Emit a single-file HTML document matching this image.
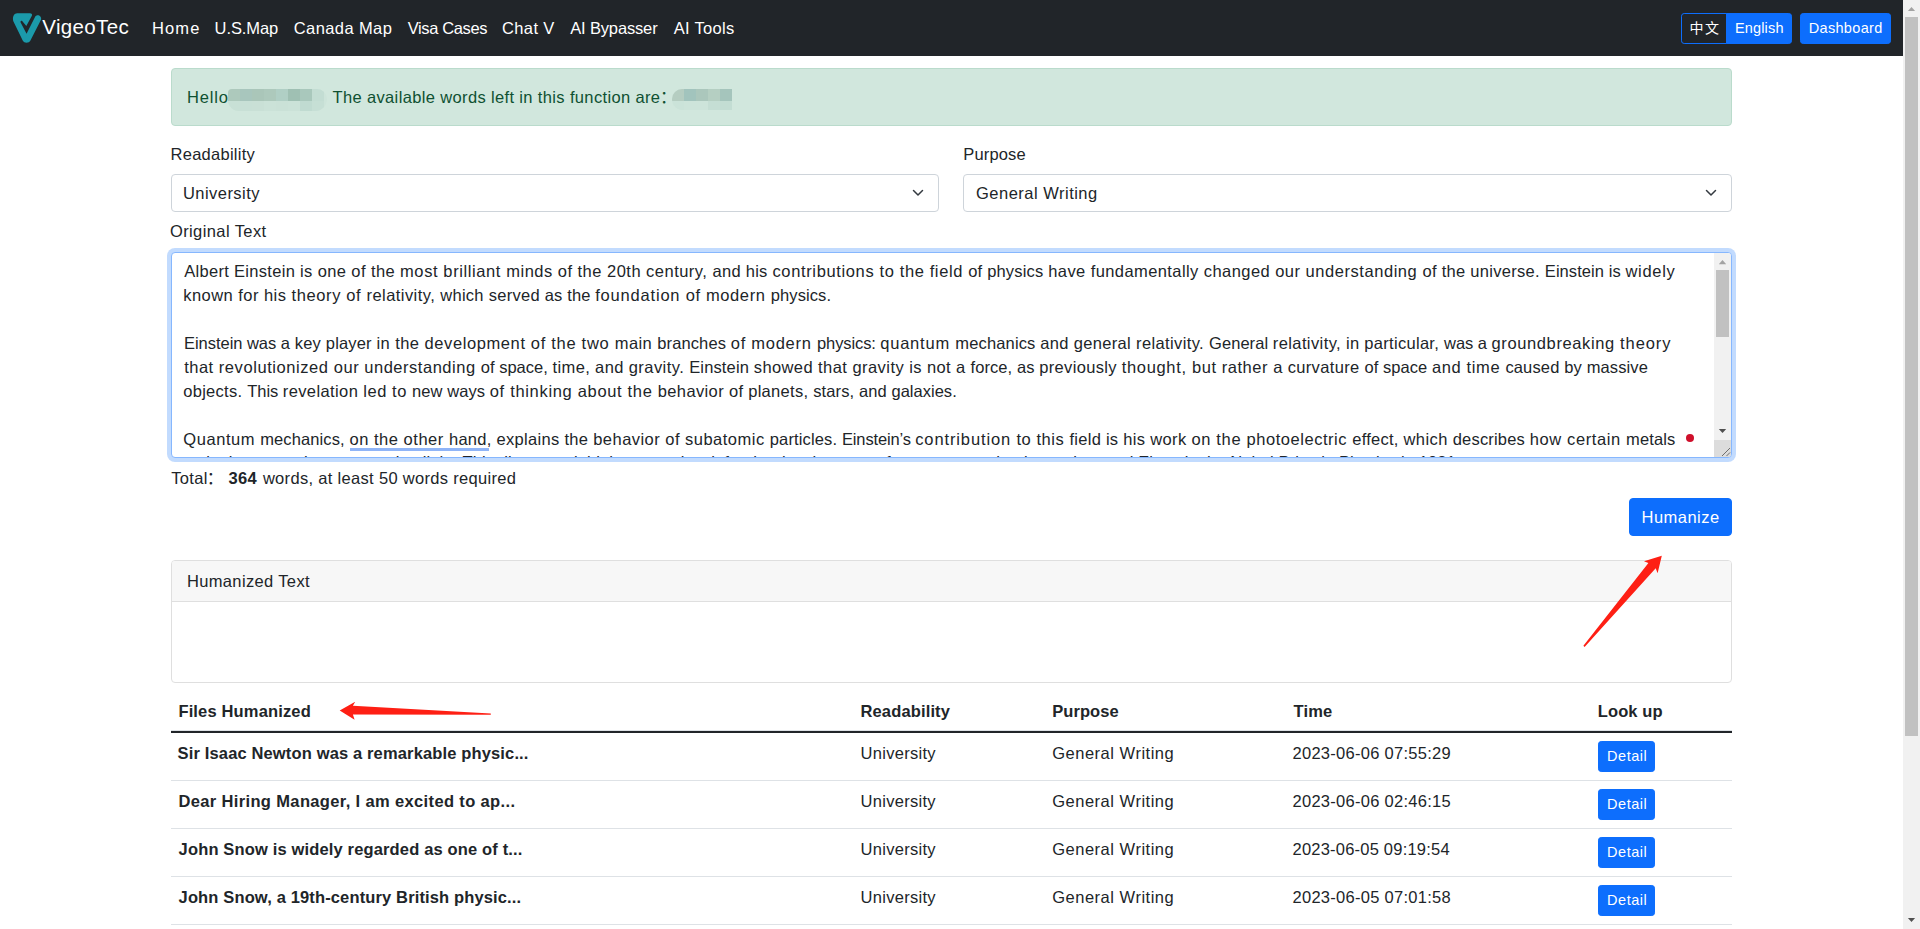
<!DOCTYPE html>
<html lang="en"><head><meta charset="utf-8"><title>VigeoTec - AI Bypasser</title>
<style>
html,body{margin:0;padding:0;}
body{width:1920px;height:929px;overflow:hidden;background:#fff;position:relative;font-family:"Liberation Sans", "Noto Sans CJK SC", sans-serif;color:#212529;font-size:16px;line-height:24px;}
.t{position:absolute;white-space:pre;line-height:24px;text-decoration:none;color:#212529;margin:0;padding:0;font-weight:400;}
nav,main,section,header{display:contents;}
.a{position:absolute;box-sizing:border-box;}
#nav{left:0;top:0;width:1903px;height:56px;background:#212529;}
.btn{background:#0d6efd;border:1px solid #0d6efd;border-radius:3.2px;}
#alert{left:171px;top:68px;width:1561px;height:58px;background:#d1e7dd;border:1px solid #badbcc;border-radius:4px;}
.sel{top:174px;height:38px;background:#fff;border:1px solid #ced4da;border-radius:4px;}
#ta{left:171px;top:252px;width:1561px;height:206px;background:#fff;border:1px solid #86b7fe;border-radius:4px;box-shadow:0 0 0 4px rgba(13,110,253,.25);overflow:hidden;}
#ta .t{}
#card{left:171px;top:560px;width:1561px;height:123px;border:1px solid #dfdfdf;border-radius:4px;background:#fff;overflow:hidden;}
#cardh{left:0;top:0;width:100%;height:41px;background:#f7f7f7;border-bottom:1px solid #dfdfdf;}
.hl{left:171px;width:1561px;height:1px;background:#dee2e6;}
</style></head>
<body>
<nav>
<div id="nav" class="a"></div>
<svg class="a" style="left:10px;top:10px" width="36" height="36" viewBox="10 10 36 36">
<path d="M12.99 19.53 C12.75 16.14 14.45 13.33 17.11 13.33 L29.95 13.33 C31.65 13.33 32.52 14.45 31.89 15.76 L26.32 25.93 L21.96 20.75 Q20.75 20.41 20.41 21.96 L26.56 33.68 L35.14 16.63 C36.01 14.93 38.91 14.45 40.37 16.39 C41.34 17.60 41.34 19.05 40.76 20.26 L30.29 40.76 C29.22 43.28 24.14 43.52 22.83 40.85 L13.33 21.23 Q13.04 20.50 12.99 19.53 Z" fill="#1b9aaa"/>
</svg>
<a href="#" class="t" style="left:42.30px;top:12px;font-size:20.5px;line-height:30px;color:#fff;letter-spacing:0.342px;">VigeoTec</a>
<a href="#" class="t" style="left:152.10px;top:16px;font-size:16.5px;color:#fff;letter-spacing:1.066px;">Home</a>
<a href="#" class="t" style="left:214.60px;top:16px;font-size:16.5px;color:#fff;letter-spacing:-0.083px;">U.S.Map</a>
<a href="#" class="t" style="left:293.80px;top:16px;font-size:16.5px;color:#fff;letter-spacing:0.4px;">Canada Map</a>
<a href="#" class="t" style="left:407.70px;top:16px;font-size:16.5px;color:#fff;letter-spacing:-0.378px;">Visa Cases</a>
<a href="#" class="t" style="left:502.10px;top:16px;font-size:16.5px;color:#fff;letter-spacing:0.34px;">Chat V</a>
<a href="#" class="t" style="left:570.20px;top:16px;font-size:16.5px;color:#fff;letter-spacing:-0.15px;">AI Bypasser</a>
<a href="#" class="t" style="left:673.75px;top:16px;font-size:16.5px;color:#fff;letter-spacing:0.286px;">AI Tools</a>
<div class="a" style="left:1681px;top:13px;width:46px;height:31px;border:1px solid #0d6efd;border-radius:3.2px 0 0 3.2px;"></div>
<div class="a btn" style="left:1726px;top:13px;width:66px;height:31px;border-radius:0 3.2px 3.2px 0;"></div>
<div class="a btn" style="left:1800px;top:13px;width:91px;height:31px;"></div>
<a href="#" class="t" style="left:1689.60px;top:18px;font-size:14px;line-height:21px;color:#fff;letter-spacing:1.45px;">中文</a>
<a href="#" class="t" style="left:1734.90px;top:18px;font-size:14.5px;line-height:21px;color:#fff;letter-spacing:0.167px;">English</a>
<a href="#" class="t" style="left:1808.75px;top:18px;font-size:14.5px;line-height:21px;color:#fff;letter-spacing:0.318px;">Dashboard</a>
</nav>
<div class="a" style="left:1903px;top:0;width:17px;height:929px;background:#f1f1f1;"></div>
<div class="a" style="left:1905px;top:17px;width:13px;height:719px;background:#c1c1c1;"></div>
<svg class="a" style="left:1903px;top:0" width="17" height="17"><path d="M4.9 10.9 L8.5 6.9 L12.1 10.9 Z" fill="#a3a3a3"/></svg>
<svg class="a" style="left:1903px;top:912px" width="17" height="17"><path d="M4.9 6.1 L12.1 6.1 L8.5 10.1 Z" fill="#505050"/></svg>
<main>
<div id="alert" class="a"></div>
<div class="a" style="left:228px;top:89px;width:99px;height:22px;border-radius:4px 10px 12px 11px;overflow:hidden;background:#cde4da"><div class="a" style="left:0px;top:0;width:12px;height:12px;background:#adc9bc"></div><div class="a" style="left:12px;top:0;width:12px;height:12px;background:#a8c6bd"></div><div class="a" style="left:24px;top:0;width:12px;height:12px;background:#aac6b9"></div><div class="a" style="left:36px;top:0;width:12px;height:12px;background:#adc9bc"></div><div class="a" style="left:48px;top:0;width:12px;height:12px;background:#b0cfc5"></div><div class="a" style="left:60px;top:0;width:12px;height:12px;background:#9fc0b3"></div><div class="a" style="left:72px;top:0;width:12px;height:12px;background:#a9c8bc"></div><div class="a" style="left:84px;top:0;width:12px;height:12px;background:#c3ddd3"></div><div class="a" style="left:0px;top:12px;width:12px;height:10px;background:#c8e0d6"></div><div class="a" style="left:12px;top:12px;width:12px;height:10px;background:#c8e0d6"></div><div class="a" style="left:24px;top:12px;width:12px;height:10px;background:#c9e0d6"></div><div class="a" style="left:36px;top:12px;width:12px;height:10px;background:#cbe2d8"></div><div class="a" style="left:48px;top:12px;width:12px;height:10px;background:#cae1d7"></div><div class="a" style="left:60px;top:12px;width:12px;height:10px;background:#cbe2d8"></div><div class="a" style="left:72px;top:12px;width:12px;height:10px;background:#c0dbd1"></div><div class="a" style="left:84px;top:12px;width:12px;height:10px;background:#c6dfd5"></div></div>
<div class="a" style="left:672px;top:89px;width:60px;height:21px;border-radius:10px 0 0 11px;overflow:hidden;background:#cde4da"><div class="a" style="left:0px;top:0;width:12px;height:12px;background:#b5cdc1"></div><div class="a" style="left:12px;top:0;width:12px;height:12px;background:#a2c4bd"></div><div class="a" style="left:24px;top:0;width:12px;height:12px;background:#abc7bc"></div><div class="a" style="left:36px;top:0;width:12px;height:12px;background:#b5cfc2"></div><div class="a" style="left:48px;top:0;width:12px;height:12px;background:#a5c5bc"></div><div class="a" style="left:0px;top:12px;width:12px;height:9px;background:#cbe3d9"></div><div class="a" style="left:12px;top:12px;width:12px;height:9px;background:#cde4da"></div><div class="a" style="left:24px;top:12px;width:12px;height:9px;background:#cde4da"></div><div class="a" style="left:36px;top:12px;width:12px;height:9px;background:#c5ded4"></div><div class="a" style="left:48px;top:12px;width:12px;height:9px;background:#c3ddd3"></div></div>
<span class="t" style="left:187.10px;top:85px;font-size:16.5px;color:#0f5132;letter-spacing:0.825px;">Hello</span>
<span class="t" style="left:332.50px;top:85px;font-size:16.5px;color:#0f5132;letter-spacing:0.357px;">The available words left in this function are</span>
<span class="t" style="left:659.90px;top:85px;font-size:16.5px;color:#0f5132;">：</span>
<label class="t" style="left:170.50px;top:142px;font-size:16.5px;letter-spacing:0.27px;">Readability</label>
<label class="t" style="left:963.30px;top:142px;font-size:16.5px;letter-spacing:0.15px;">Purpose</label>
<div class="a sel" style="left:171px;width:768px;"><svg class="a" style="right:12px;top:12px" width="16" height="12" viewBox="0 0 16 12"><path d="M3.5 3.5 L8 8 L12.5 3.5" fill="none" stroke="#343a40" stroke-width="1.5" stroke-linecap="round" stroke-linejoin="round"/></svg></div>
<div class="a sel" style="left:963px;width:769px;"><svg class="a" style="right:12px;top:12px" width="16" height="12" viewBox="0 0 16 12"><path d="M3.5 3.5 L8 8 L12.5 3.5" fill="none" stroke="#343a40" stroke-width="1.5" stroke-linecap="round" stroke-linejoin="round"/></svg></div>
<span class="t" style="left:183.00px;top:181px;font-size:16.5px;letter-spacing:0.444px;">University</span>
<span class="t" style="left:976.00px;top:181px;font-size:16.5px;letter-spacing:0.492px;">General Writing</span>
<label class="t" style="left:169.90px;top:219px;font-size:16.5px;letter-spacing:0.409px;">Original Text</label>
<div id="ta" class="a">
<div class="t" style="left:12.25px;top:6px;font-size:16.5px"><span style="letter-spacing:0.298px">Albert Einstein </span><span style="letter-spacing:0.394px">is one of the </span><span style="letter-spacing:0.603px">most brilliant </span><span style="letter-spacing:0.483px">minds of the </span><span style="letter-spacing:0.481px">20th century, </span><span style="letter-spacing:0.275px">and his </span><span style="letter-spacing:0.633px">contributions </span><span style="letter-spacing:0.617px">to the field </span><span style="letter-spacing:0.186px">of physics </span><span style="letter-spacing:0.411px">have fundamentally </span><span style="letter-spacing:0.452px">changed our </span><span style="letter-spacing:0.559px">understanding </span><span style="letter-spacing:0.288px">of the universe. </span><span style="letter-spacing:0.075px">Einstein is </span><span style="letter-spacing:0.688px">widely</span></div>
<div class="t" style="left:11.25px;top:30px;font-size:16.5px"><span style="letter-spacing:0.461px">known for his </span><span style="letter-spacing:0.62px">theory of </span><span style="letter-spacing:0.44px">relativity, </span><span style="letter-spacing:0.278px">which served </span><span style="letter-spacing:0.136px">as the </span><span style="letter-spacing:0.804px">foundation </span><span style="letter-spacing:0.613px">of modern </span><span style="letter-spacing:0.092px">physics.</span></div>
<div class="t" style="left:12.00px;top:78px;font-size:16.5px"><span style="letter-spacing:-0.036px">Einstein was </span><span style="letter-spacing:0.169px">a key player </span><span style="letter-spacing:0.435px">in the </span><span style="letter-spacing:0.598px">development </span><span style="letter-spacing:0.714px">of the two </span><span style="letter-spacing:0.428px">main </span><span style="letter-spacing:0.115px">branches </span><span style="letter-spacing:0.738px">of modern </span><span style="letter-spacing:-0.104px">physics: </span><span style="letter-spacing:0.775px">quantum </span><span style="letter-spacing:0.155px">mechanics </span><span style="letter-spacing:0.333px">and general </span><span style="letter-spacing:0.378px">relativity. </span><span style="letter-spacing:0.057px">General </span><span style="letter-spacing:0.398px">relativity, </span><span style="letter-spacing:0.297px">in particular, </span><span style="letter-spacing:-0.031px">was a </span><span style="letter-spacing:0.616px">groundbreaking </span><span style="letter-spacing:0.928px">theory</span></div>
<div class="t" style="left:12.25px;top:102px;font-size:16.5px"><span style="letter-spacing:0.478px">that </span><span style="letter-spacing:0.573px">revolutionized </span><span style="letter-spacing:0.516px">our </span><span style="letter-spacing:0.523px">understanding </span><span style="letter-spacing:0.02px">of space, </span><span style="letter-spacing:0.378px">time, and </span><span style="letter-spacing:0.439px">gravity. </span><span style="letter-spacing:0.134px">Einstein </span><span style="letter-spacing:0.397px">showed </span><span style="letter-spacing:0.458px">that gravity </span><span style="letter-spacing:0.384px">is not a </span><span style="letter-spacing:0.087px">force, as </span><span style="letter-spacing:0.33px">previously </span><span style="letter-spacing:0.668px">thought, </span><span style="letter-spacing:0.548px">but rather </span><span style="letter-spacing:0.344px">a curvature </span><span style="letter-spacing:0.059px">of space </span><span style="letter-spacing:0.614px">and time </span><span style="letter-spacing:0.149px">caused by </span><span style="letter-spacing:0.114px">massive</span></div>
<div class="t" style="left:11.25px;top:126px;font-size:16.5px"><span style="letter-spacing:0.283px">objects. </span><span style="letter-spacing:-0.053px">This </span><span style="letter-spacing:0.396px">revelation </span><span style="letter-spacing:0.542px">led to </span><span style="letter-spacing:0.08px">new ways </span><span style="letter-spacing:0.682px">of thinking </span><span style="letter-spacing:0.659px">about the </span><span style="letter-spacing:0.373px">behavior </span><span style="letter-spacing:0.293px">of planets, </span><span style="letter-spacing:0.109px">stars, and </span><span style="letter-spacing:0.016px">galaxies.</span></div>
<div class="t" style="left:11.25px;top:174px;font-size:16.5px"><span style="letter-spacing:0.566px">Quantum </span><span style="letter-spacing:0.109px">mechanics, </span><span style="letter-spacing:0.526px">on the other </span><span style="letter-spacing:0.271px">hand, </span><span style="letter-spacing:0.315px">explains the </span><span style="letter-spacing:0.457px">behavior </span><span style="letter-spacing:0.489px">of subatomic </span><span style="letter-spacing:0.149px">particles. </span><span style="letter-spacing:-0.151px">Einstein’s </span><span style="letter-spacing:0.874px">contribution </span><span style="letter-spacing:0.549px">to this </span><span style="letter-spacing:0.266px">field is </span><span style="letter-spacing:0.349px">his work </span><span style="letter-spacing:0.647px">on the </span><span style="letter-spacing:0.544px">photoelectric </span><span style="letter-spacing:0.252px">effect, </span><span style="letter-spacing:0.411px">which </span><span style="letter-spacing:0.185px">describes </span><span style="letter-spacing:0.603px">how certain </span><span style="letter-spacing:0.138px">metals</span></div>
<div class="t" style="left:11.25px;top:197px;font-size:16.5px"><span style="letter-spacing:0.092px">emit electrons when exposed to light. This discovery laid the groundwork for the development of quantum mechanics and earned Einstein the Nobel Prize in Physics in 1921.</span></div>
<div class="a" style="left:178px;top:195px;width:139px;height:3px;background:#8fb4f7"></div>
<div class="a" style="left:1513.8px;top:180.8px;width:8.2px;height:8.2px;border-radius:50%;background:#cf0f2b"></div>
<div class="a" style="left:1542px;top:0;width:17px;height:187px;background:#f1f1f1"></div>
<div class="a" style="left:1544px;top:17px;width:13px;height:67px;background:#c1c1c1"></div>
<svg class="a" style="left:1542px;top:0" width="17" height="17"><path d="M4.8 11.2 L8.5 7 L12.2 11.2 Z" fill="#a3a3a3"/></svg>
<svg class="a" style="left:1542px;top:170px" width="17" height="17"><path d="M4.8 5.9 L12.2 5.9 L8.5 10 Z" fill="#505050"/></svg>
<div class="a" style="left:1542px;top:187px;width:17px;height:17px;background:#dcdcdc"></div>
<svg class="a" style="left:1542px;top:187px" width="17" height="17"><path d="M16 8 L8 16 M16 12.5 L12.5 16" stroke="#6e6e6e" stroke-width="1" fill="none"/></svg>
</div>
<span class="t" style="left:171.25px;top:466px;font-size:16.5px;letter-spacing:0.336px;">Total</span>
<span class="t" style="left:206.80px;top:466px;font-size:16.5px;">：</span>
<span class="t" style="left:228.50px;top:466px;font-size:16.5px;font-weight:700;letter-spacing:0.3px;">364</span>
<span class="t" style="left:262.90px;top:466px;font-size:16.5px;letter-spacing:0.316px;">words, at least 50 words required</span>
<div class="a btn" style="left:1629px;top:498px;width:103px;height:38px;border-radius:4px;"></div>
<span class="t" style="left:1641.60px;top:505px;font-size:16.5px;color:#fff;letter-spacing:0.457px;">Humanize</span>
<div id="card" class="a"><div id="cardh" class="a"></div></div>
<span class="t" style="left:186.90px;top:569px;font-size:16.5px;letter-spacing:0.361px;">Humanized Text</span>
<b class="t" style="left:178.40px;top:699px;font-size:16.5px;font-weight:700;letter-spacing:0.157px;">Files Humanized</b>
<b class="t" style="left:860.50px;top:699px;font-size:16.5px;font-weight:700;letter-spacing:0.14px;">Readability</b>
<b class="t" style="left:1052.20px;top:699px;font-size:16.5px;font-weight:700;letter-spacing:0.067px;">Purpose</b>
<b class="t" style="left:1293.50px;top:699px;font-size:16.5px;font-weight:700;letter-spacing:0.167px;">Time</b>
<b class="t" style="left:1597.75px;top:699px;font-size:16.5px;font-weight:700;letter-spacing:0.109px;">Look up</b>
<div class="a hl" style="top:730px;"></div>
<div class="a" style="left:171px;top:731px;width:1561px;height:2px;background:#212529"></div>
<div class="a hl" style="top:780px;"></div>
<div class="a btn" style="left:1598px;top:741px;width:57px;height:31px;"></div>
<b class="t" style="left:177.60px;top:741px;font-size:16.5px;font-weight:700;letter-spacing:0.143px;">Sir Isaac Newton was a remarkable physic...</b>
<span class="t" style="left:860.50px;top:741px;font-size:16.5px;letter-spacing:0.289px;">University</span>
<span class="t" style="left:1052.20px;top:741px;font-size:16.5px;letter-spacing:0.515px;">General Writing</span>
<span class="t" style="left:1292.50px;top:741px;font-size:16.5px;letter-spacing:0.273px;">2023-06-06 07:55:29</span>
<a href="#" class="t" style="left:1607.10px;top:746px;font-size:14.5px;line-height:21px;color:#fff;letter-spacing:0.5px;">Detail</a>
<div class="a hl" style="top:828px;"></div>
<div class="a btn" style="left:1598px;top:789px;width:57px;height:31px;"></div>
<b class="t" style="left:178.40px;top:789px;font-size:16.5px;font-weight:700;letter-spacing:0.361px;">Dear Hiring Manager, I am excited to ap...</b>
<span class="t" style="left:860.50px;top:789px;font-size:16.5px;letter-spacing:0.289px;">University</span>
<span class="t" style="left:1052.20px;top:789px;font-size:16.5px;letter-spacing:0.515px;">General Writing</span>
<span class="t" style="left:1292.50px;top:789px;font-size:16.5px;letter-spacing:0.273px;">2023-06-06 02:46:15</span>
<a href="#" class="t" style="left:1607.10px;top:794px;font-size:14.5px;line-height:21px;color:#fff;letter-spacing:0.5px;">Detail</a>
<div class="a hl" style="top:876px;"></div>
<div class="a btn" style="left:1598px;top:837px;width:57px;height:31px;"></div>
<b class="t" style="left:178.60px;top:837px;font-size:16.5px;font-weight:700;letter-spacing:0.152px;">John Snow is widely regarded as one of t...</b>
<span class="t" style="left:860.50px;top:837px;font-size:16.5px;letter-spacing:0.289px;">University</span>
<span class="t" style="left:1052.20px;top:837px;font-size:16.5px;letter-spacing:0.515px;">General Writing</span>
<span class="t" style="left:1292.50px;top:837px;font-size:16.5px;letter-spacing:0.217px;">2023-06-05 09:19:54</span>
<a href="#" class="t" style="left:1607.10px;top:842px;font-size:14.5px;line-height:21px;color:#fff;letter-spacing:0.5px;">Detail</a>
<div class="a hl" style="top:924px;"></div>
<div class="a btn" style="left:1598px;top:885px;width:57px;height:31px;"></div>
<b class="t" style="left:178.60px;top:885px;font-size:16.5px;font-weight:700;letter-spacing:0.137px;">John Snow, a 19th-century British physic...</b>
<span class="t" style="left:860.50px;top:885px;font-size:16.5px;letter-spacing:0.289px;">University</span>
<span class="t" style="left:1052.20px;top:885px;font-size:16.5px;letter-spacing:0.515px;">General Writing</span>
<span class="t" style="left:1292.50px;top:885px;font-size:16.5px;letter-spacing:0.273px;">2023-06-05 07:01:58</span>
<a href="#" class="t" style="left:1607.10px;top:890px;font-size:14.5px;line-height:21px;color:#fff;letter-spacing:0.5px;">Detail</a>
</main>
<svg class="a" style="left:0;top:0;pointer-events:none" width="1903" height="929">
<path d="M1661.8 555.7 L1644 561.2 L1648.4 562.9 L1583.4 645.7 L1584.6 646.9 L1655.7 568.2 L1657.6 573.2 Z" fill="#fe1f14"/>
<path d="M339.7 710.5 L355.2 701.7 L352.9 705.8 L490.8 713.4 L490.8 714.7 L352.9 714.4 L354.6 719.7 Z" fill="#fe1f14"/>
</svg>
</body></html>
